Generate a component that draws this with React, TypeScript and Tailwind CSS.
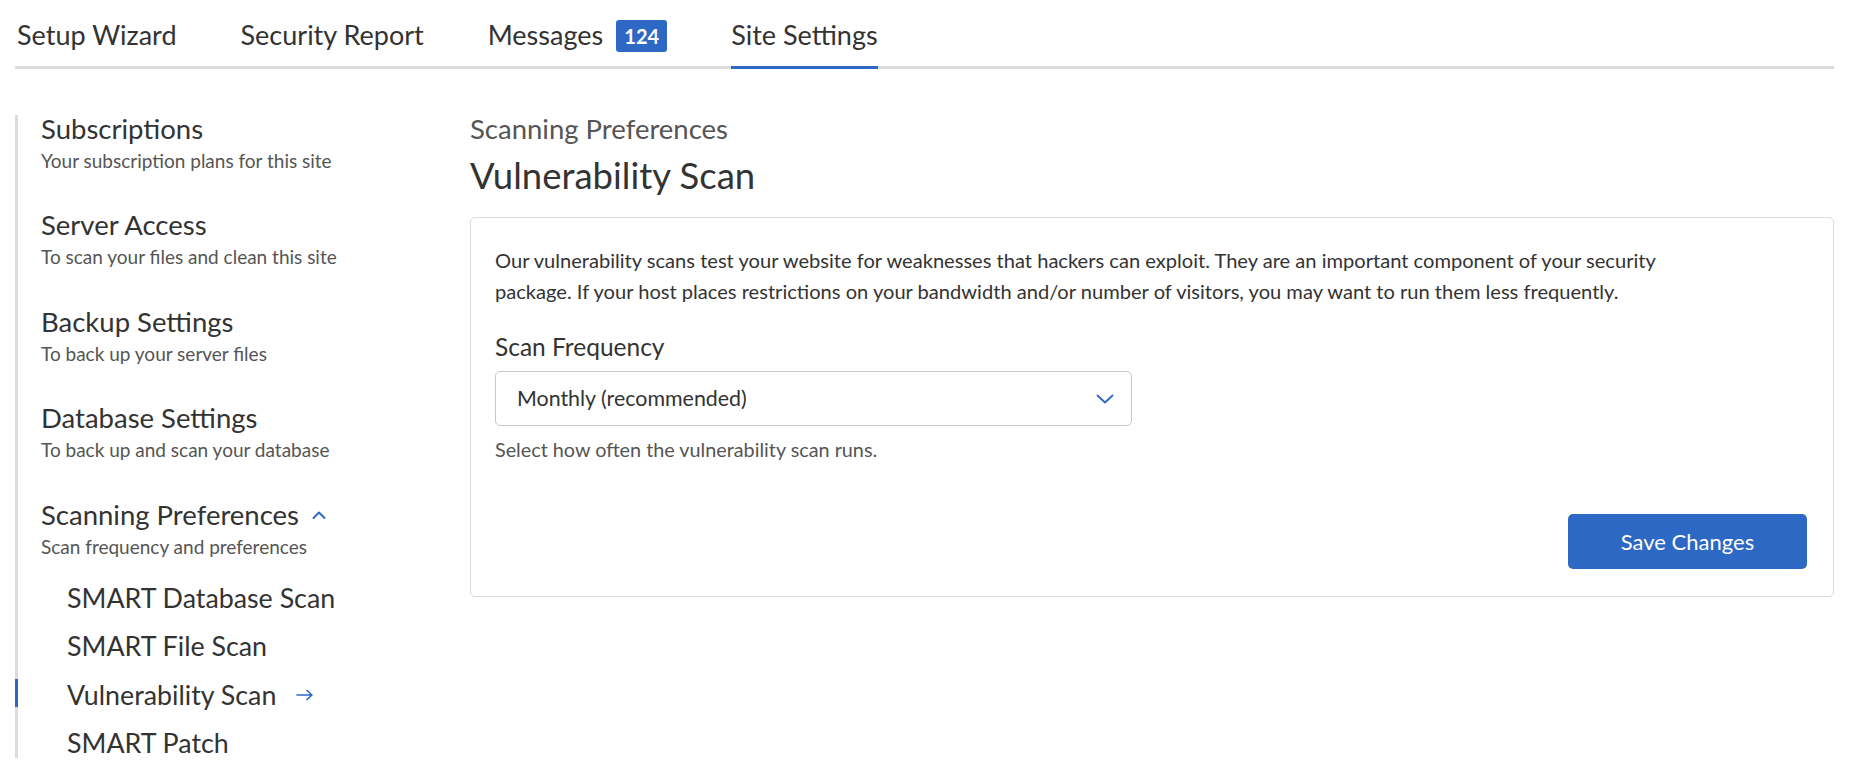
import React from "react";

const tabs = [
  { label: "Setup Wizard" },
  { label: "Security Report" },
  { label: "Messages", badge: "124" },
  { label: "Site Settings", active: true },
];

const sections = [
  { title: "Subscriptions", sub: "Your subscription plans for this site" },
  { title: "Server Access", sub: "To scan your files and clean this site" },
  { title: "Backup Settings", sub: "To back up your server files" },
  { title: "Database Settings", sub: "To back up and scan your database" },
];

const subItems = [
  { label: "SMART Database Scan" },
  { label: "SMART File Scan" },
  { label: "Vulnerability Scan", active: true },
  { label: "SMART Patch" },
];

function ChevronUp() {
  return (
    <svg width="16" height="10" viewBox="0 0 16 10" fill="none" className="ml-[12px]">
      <path d="M2.5 8L8 2.5L13.5 8" stroke="#2d68c4" strokeWidth="2" strokeLinecap="round" strokeLinejoin="round" />
    </svg>
  );
}

function ArrowRight() {
  return (
    <svg width="18" height="12" viewBox="0 0 18 12" fill="none" className="ml-[20px]">
      <path d="M1 6H16M11 1.5L16 6L11 10.5" stroke="#2d68c4" strokeWidth="1.6" strokeLinecap="round" strokeLinejoin="round" />
    </svg>
  );
}

function ChevronDown() {
  return (
    <svg width="18" height="10" viewBox="0 0 18 10" fill="none">
      <path d="M1.5 1.5L9 8.5L16.5 1.5" stroke="#2d68c4" strokeWidth="1.8" strokeLinecap="round" strokeLinejoin="round" />
    </svg>
  );
}

export default function App() {
  return (
    <div className="min-h-screen bg-white pl-[15px] pr-[22px] font-['Lato',sans-serif] text-[#333333]">
      {/* Tabs */}
      <div className="flex gap-[64px] border-b-[3px] border-[#dcdcdc] pl-[2px]">
        {tabs.map((t) => (
          <div
            key={t.label}
            className={
              "flex h-[69px] items-center pt-[5px] text-[27px] -mb-[3px] border-b-[3px] " +
              (t.active ? "border-[#2d68c4]" : "border-transparent")
            }
          >
            <span>{t.label}</span>
            {t.badge && (
              <span className="ml-[13px] flex h-[32px] w-[51px] items-center justify-center rounded-[3px] bg-[#2d68c4] text-[20px] font-bold text-white">
                {t.badge}
              </span>
            )}
          </div>
        ))}
      </div>

      <div className="mt-[46px] flex">
        {/* Sidebar */}
        <div className="relative w-[455px] shrink-0 border-l-[3px] border-[#dcdcdc] pl-[23px]">
          <div className="flex flex-col gap-[39.4px]">
            {sections.map((s) => (
              <div key={s.title}>
                <div className="text-[27.5px] leading-[28px]">{s.title}</div>
                <div className="mt-[7px] text-[19px] leading-[22px] text-[#555555]">{s.sub}</div>
              </div>
            ))}
            <div>
              <div className="flex items-center text-[27.5px] leading-[28px]">
                Scanning Preferences
                <ChevronUp />
              </div>
              <div className="mt-[7px] text-[19px] leading-[22px] text-[#555555]">Scan frequency and preferences</div>
              <div className="mt-[25px] flex flex-col gap-[18.5px] pl-[26px]">
                {subItems.map((i) => (
                  <div key={i.label} className="relative flex h-[30px] items-center text-[26.8px] leading-[30px]">
                    {i.active && <span className="absolute left-[-52px] top-[-1px] h-[28px] w-[3px] bg-[#2d68c4]" />}
                    {i.label}
                    {i.active && <ArrowRight />}
                  </div>
                ))}
              </div>
            </div>
          </div>
        </div>

        {/* Main */}
        <div className="flex-1">
          <div className="text-[27.5px] leading-[28px] text-[#555555]">Scanning Preferences</div>
          <h1 className="mt-[12px] text-[36.5px] leading-[40px]">Vulnerability Scan</h1>

          <div className="mt-[22px] rounded-[5px] border border-[#dcdcdc] pt-[27px] pb-[27px] pl-[24px] pr-[26px]">
            <p className="text-[20.1px] leading-[30.5px]">
              Our vulnerability scans test your website for weaknesses that hackers can exploit. They are an important component of your security
              <br />
              package. If your host places restrictions on your bandwidth and/or number of visitors, you may want to run them less frequently.
            </p>

            <div className="mt-[27px] text-[24.5px] leading-[28px]">Scan Frequency</div>
            <div className="mt-[10px] flex h-[55px] w-[637px] items-center justify-between rounded-[5px] border border-[#c8c8c8] pl-[21px] pr-[17px] text-[21.4px]">
              <span>Monthly (recommended)</span>
              <ChevronDown />
            </div>
            <div className="mt-[11px] text-[19.8px] leading-[24px] text-[#555555]">Select how often the vulnerability scan runs.</div>

            <div className="mt-[53px] flex justify-end">
              <button className="h-[55px] w-[239px] rounded-[5px] bg-[#2d68c4] text-[22px] text-white">Save Changes</button>
            </div>
          </div>
        </div>
      </div>
    </div>
  );
}
